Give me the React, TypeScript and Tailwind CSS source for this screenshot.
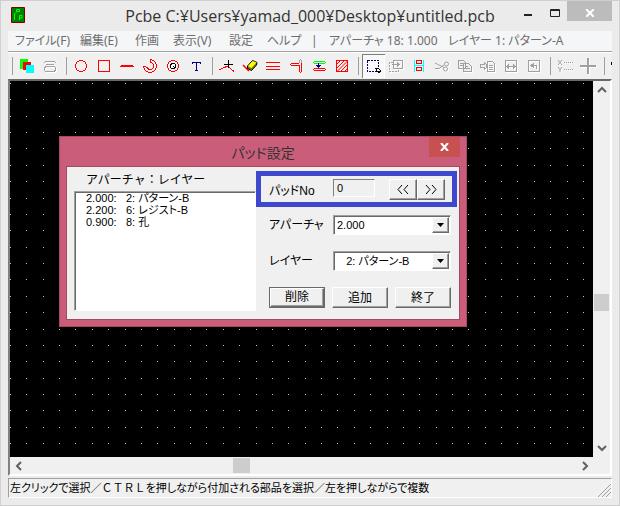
import type { ReactNode } from 'react'

// Board grid, in canvas pixels
const GRID_STEP = 16.37
const gridPath = (() => {
  let d = ''
  for (let r = 0; r < 80; r++) {
    for (let c = 0; c < 140; c++) {
      d += `M${Math.round(c * GRID_STEP)} ${Math.round(r * GRID_STEP) + 2}h1v1h-1z`
    }
  }
  return d
})()

const ARROW = {
  left: 'M7 1L3 5L7 9',
  right: 'M3 1L7 5L3 9',
  up: 'M1 7L5 3L9 7',
  down: 'M1 3L5 7L9 3',
}

const RED = '#ff0000'
const GRAY = '#a0a0a0'

type Tool = { name: string; icon: ReactNode; disabled?: boolean; active?: boolean }

const TOOL_GROUPS: Tool[][] = [
  [
    {
      name: 'Layers',
      icon: (
        <>
          <path fill="#00ff00" d="M4 5h8v10H4z" />
          <path fill={RED} d="M7 8h8v8H7z" />
          <path fill="#00ffff" d="M10 11h8v8h-8z" />
        </>
      ),
    },
    {
      name: 'Stack',
      disabled: true,
      icon: (
        <g fill="none" stroke={GRAY}>
          <path d="M6 7.500H16M7 10.500H15M5.500 8V9M16.500 8V9" />
          <rect x="5.500" y="12.500" width="11" height="5" rx="2.500" />
        </g>
      ),
    },
  ],
  [
    { name: 'Circle', icon: <circle cx="11" cy="12" r="5.500" fill="none" stroke={RED} /> },
    { name: 'Rectangle', icon: <path d="M5.500 6.500h11v11h-11z" fill="none" stroke={RED} /> },
    { name: 'Line', icon: <path d="M5 11h12v2H5zM4 11.500h14v1H4z" fill={RED} /> },
    {
      name: 'Arc',
      icon: (
        <path
          d="M4.500 13A6.500 6.500 0 1 0 12 5.500L11.500 8L14 10A3 3 0 1 1 8.500 14L6.500 12.500Z"
          fill="none"
          stroke={RED}
        />
      ),
    },
    {
      name: 'Pad',
      icon: (
        <>
          <circle cx="11" cy="12" r="5.500" fill="none" stroke={RED} />
          <circle cx="11" cy="12" r="2.500" fill="#fff" stroke="#000" />
          <path d="M10.500 11.500h1v1h-1z" />
        </>
      ),
    },
    { name: 'Text', icon: <path d="M7.500 10V8.500H15.500V10M11.500 8V17M10 16.500H13" fill="none" stroke="#000080" /> },
  ],
  [
    {
      name: 'Vertex',
      icon: (
        <g fill="none">
          <path d="M3 16L7 14L12 12L14 14L18 17.500" stroke={RED} />
          <path d="M8 10.500H17M12.500 6V14" stroke="#000" />
        </g>
      ),
    },
    {
      name: 'Erase',
      icon: (
        <g shapeRendering="auto">
          <path d="M4 11L10 17" fill="none" stroke={RED} strokeWidth="1.500" />
          <path d="M13.500 6.500L18 8.500L17.500 11L12.500 16.500L8.500 14.500L8.500 12Z" fill="#808000" stroke="#000" />
          <path d="M13.500 7L17.500 8.500L12.500 14L9 12Z" fill="#ffff00" />
        </g>
      ),
    },
    {
      name: 'Parallel',
      icon: <path d="M4 8.500H18M4 12.500H18M4 15.500H18" fill="none" stroke={RED} />,
    },
    {
      name: 'Trim',
      icon: (
        <g fill="none">
          <path d="M14.500 9V6.500L15.500 5.500L16.500 6.500V9" stroke={GRAY} />
          <path d="M14 9.500H6M14 11.500H6M5.500 10V11M14.500 11V18M16.500 9V18M15 18.500H16" stroke={RED} />
        </g>
      ),
    },
    {
      name: 'Move line',
      icon: (
        <g fill="none">
          <path d="M6 7.500H17M6 9.500H17M5.500 8V9M17.500 8V9" stroke="#00ff00" />
          <path d="M6 14.500H17M6 16.500H17M5.500 15V16M17.500 15V16" stroke={RED} />
          <path d="M10.500 9V14" stroke="#000080" />
          <path d="M8 11H13L10.500 14Z" fill="#000080" />
        </g>
      ),
    },
    {
      name: 'Fill',
      icon: (
        <g fill="none" stroke={RED}>
          <path d="M5.500 6.500h11v11h-11z" />
          <path
            shapeRendering="auto"
            d="M6 10L9 7M6 14L13 7M6 17.500L16.500 7M10 17L16 11M14 17L16 15"
          />
        </g>
      ),
    },
  ],
  [
    {
      name: 'Select',
      active: true,
      icon: (
        <>
          <path d="M5.500 6.500h11v11h-11z" fill="none" stroke="#000080" strokeDasharray="2 1" />
          <path d="M13.500 14.500l3 0l2 2l-1 2l-2-1z" fill="#fff" stroke="#000" />
        </>
      ),
    },
    {
      name: 'Move',
      disabled: true,
      icon: (
        <g fill="none" stroke={GRAY}>
          <path d="M8.500 6.500h9v8h-9z" />
          <path d="M8 8.500H4.500V17.500H13.500V15" strokeDasharray="2 1" />
          <path d="M7 10.500H13" />
          <path d="M12 8V13L15 10.500Z" fill={GRAY} stroke="none" />
        </g>
      ),
    },
    {
      name: 'Align',
      icon: (
        <g fill="none">
          <path d="M6.500 6V18M15.500 6V18M7 11.500H15" stroke="#00ffff" />
          <path d="M8.500 6.500h5v3h-5zM8.500 13.500h5v3h-5z" stroke={RED} />
        </g>
      ),
    },
    {
      name: 'Cut',
      disabled: true,
      icon: (
        <g fill="none" stroke={GRAY} shapeRendering="auto">
          <path d="M4 9L13 13.500M4 14.500H8L13 11" />
          <circle cx="15.500" cy="10" r="2" />
          <circle cx="14.500" cy="15" r="2" />
        </g>
      ),
    },
    {
      name: 'Copy',
      disabled: true,
      icon: (
        <path
          d="M4.500 6.500h5l2 2v6h-7zM9.500 9.500h5l3 3v5h-8zM6 9.500h3M6 11.500h3M11 12.500h3M11 14.500h5"
          fill="#f0f0f0"
          stroke={GRAY}
        />
      ),
    },
    {
      name: 'Paste',
      disabled: true,
      icon: (
        <g fill="none" stroke={GRAY}>
          <path d="M10.500 7.500h5l2 2v8h-7zM12 11.500h4M12 13.500h4M12 15.500h4" />
          <path d="M3.500 10.500h4v-2l3 3.500l-3 3.500v-2h-4z" fill="#f0f0f0" />
        </g>
      ),
    },
    {
      name: 'Mirror',
      disabled: true,
      icon: (
        <>
          <path d="M5.500 6.500h11v11h-11zM7 12.500H16" fill="none" stroke={GRAY} />
          <path d="M6 12.500l3-3v6zM16 12.500l-3-3v6z" fill={GRAY} />
        </>
      ),
    },
    {
      name: 'Rotate',
      disabled: true,
      icon: (
        <>
          <path d="M5.500 6.500h11v11h-11zM10 11.500H13.500V15" fill="none" stroke={GRAY} />
          <path d="M7 11.500l4-3v6z" fill={GRAY} />
        </>
      ),
    },
  ],
  [
    {
      name: 'Coordinates',
      disabled: true,
      icon: (
        <g fill="none" stroke={GRAY}>
          <path d="M4 6L8 11M8 6L4 11M4 13L6 15.500L8 13M6 15V18" shapeRendering="auto" />
          <path d="M10 8.500H19M10 15.500H19" strokeDasharray="1 1" />
        </g>
      ),
    },
    {
      name: 'Origin',
      disabled: true,
      icon: <path d="M3 12H19M11 4V20" fill="none" stroke={GRAY} strokeWidth="2" />,
    },
  ],
]

const MENUS = [
  { label: 'ファイル(F)', width: 'w-[65px]' },
  { label: '編集(E)', width: 'w-[55px]' },
  { label: '作画', width: 'w-[38px]' },
  { label: '表示(V)', width: 'w-[56px]' },
  { label: '設定', width: 'w-[38px]' },
  { label: 'ヘルプ', width: 'w-[44px]' },
]

const PADS = [
  { aperture: '2.000:', layer: '2: パターン-B' },
  { aperture: '2.200:', layer: '6: レジスト-B' },
  { aperture: '0.900:', layer: '8: 孔' },
]

const raised =
  'border border-t-white border-l-white border-r-[#696969] border-b-[#696969] shadow-[inset_-1px_-1px_0_#a0a0a0] bg-[#f0f0f0]'
const sunken =
  'border border-t-[#a0a0a0] border-l-[#a0a0a0] border-r-white border-b-white shadow-[inset_1px_1px_0_#696969]'

function Arrow({ dir }: { dir: keyof typeof ARROW }) {
  return (
    <svg width="10" height="10" fill="none" stroke="#606060" strokeWidth="2">
      <path d={ARROW[dir]} />
    </svg>
  )
}

function Separator() {
  return (
    <div className="flex w-2 shrink-0 justify-center">
      <div className="h-[18px] w-px bg-[#a0a0a0]" />
    </div>
  )
}

function Select({ id, value }: { id: string; value: string }) {
  return (
    <div className={`relative flex h-5 flex-1 bg-white ${sunken}`}>
      <select
        id={id}
        defaultValue={value}
        className="w-full appearance-none bg-transparent pl-[3px] text-[11px] leading-4 outline-none"
      >
        <option value={value}>{value}</option>
      </select>
      <span
        className={`pointer-events-none absolute top-px right-px flex h-4 w-[17px] items-center justify-center ${raised}`}
      >
        <svg width="7" height="4">
          <path d="M0 0H7L3.500 4Z" />
        </svg>
      </span>
    </div>
  )
}

function PadDialog() {
  return (
    <section
      aria-label="パッド設定"
      className="absolute top-[55px] left-[49px] w-[408px] border border-[#a34a62] bg-[#ca5e7a] px-1.5 pb-1.5"
    >
      <header className="relative flex h-[29px] items-center justify-center">
        <h2 className="pt-0.5 text-[14px] text-[#333]">パッド設定</h2>
        <button
          aria-label="Close"
          className="absolute top-0 right-0 flex h-5 w-[31px] items-center justify-center bg-[#c75050]"
        >
          <svg width="9" height="8" stroke="#fff" strokeWidth="2">
            <path d="M1 0L8 8M8 0L1 8" />
          </svg>
        </button>
      </header>

      <div className="flex border border-[#a34a62] bg-[#f0f0f0] pb-2 font-['Liberation_Sans','Noto_Sans_CJK_JP',sans-serif] text-black">
        <div className="w-[189px] pt-0.5 pl-[7px]">
          <h3 className="pl-3 text-[12px] leading-[22px] [font-feature-settings:normal]">アパーチャ：レイヤー</h3>
          <ul className={`h-[120px] w-[182px] bg-white pl-[11px] text-[11px] leading-3 ${sunken}`}>
            {PADS.map((p) => (
              <li key={p.layer} className="flex">
                <span className="w-10">{p.aperture}</span>
                <span>{p.layer}</span>
              </li>
            ))}
          </ul>
        </div>

        <div className="flex-1 pt-1 pr-0.5">
          <div className="flex h-9 items-center border-[5px] border-[#3f48cc] pr-[7px] pl-2">
            <label htmlFor="pad-no" className="w-16 pt-1 text-[12px]">
              パッドNo
            </label>
            <input
              id="pad-no"
              readOnly
              defaultValue="0"
              className="mb-0.5 h-[18px] w-[42px] border border-t-[#808080] border-l-[#808080] border-r-white border-b-white bg-[#f0f0f0] pl-[3px] text-[11px] outline-none"
            />
            <button
              aria-label="Previous pad"
              className={`ml-auto flex h-[21px] w-7 items-center justify-center ${raised}`}
            >
              <svg width="12" height="9" fill="none" stroke="#000">
                <path d="M5 0L1 4.500L5 9M11 0L7 4.500L11 9" />
              </svg>
            </button>
            <button aria-label="Next pad" className={`flex h-[21px] w-7 items-center justify-center ${raised}`}>
              <svg width="12" height="9" fill="none" stroke="#000">
                <path d="M1 0L5 4.500L1 9M7 0L11 4.500L7 9" />
              </svg>
            </button>
          </div>

          <div className="mt-2 flex items-center pr-1.5 pl-[13px]">
            <label htmlFor="aperture" className="w-16 text-[12px]">
              アパーチャ
            </label>
            <Select id="aperture" value="2.000" />
          </div>
          <div className="mt-4 flex items-center pr-1.5 pl-[13px]">
            <label htmlFor="layer" className="w-16 text-[12px]">
              レイヤー
            </label>
            <Select id="layer" value={'\u00a0\u00a0\u00a02: パターン-B'} />
          </div>

          <div className="mt-4 flex justify-between pr-1.5 pl-[13px] text-[12px] leading-4">
            <button className="h-[21px] w-14 border border-[#696969]">
              <span className={`block h-full ${raised}`}>削除</span>
            </button>
            <button className={`h-[21px] w-14 ${raised}`}>追加</button>
            <button className={`h-[21px] w-14 ${raised}`}>終了</button>
          </div>
        </div>
      </div>
    </section>
  )
}

export default function App() {
  return (
    <main className="flex min-h-screen flex-col border border-[#cfcfcf] bg-[#ebebeb] px-[7px] pb-[7px] font-['Noto_Sans','Noto_Sans_CJK_JP',sans-serif] [font-feature-settings:'palt']">
      <header className="relative flex h-[30px] items-start justify-center">
        <svg className="absolute top-1.5 left-[3px]" width="14" height="16" fill="none">
          <path d="M.5.5h13v15H.5z" fill="#008000" stroke="#800000" />
          <path d="M3.500 13V7L6 4.500M5.500 2.500h3v2h-3zM8.500 13V8.500H11V11H8.500" stroke="#00ff00" />
        </svg>
        <h1 className="pt-px font-['Open_Sans',sans-serif] text-[16px] leading-7 whitespace-nowrap text-[#333]">
          Pcbe C:¥Users¥yamad_000¥Desktop¥untitled.pcb
        </h1>
        <div className="absolute top-0 right-0 flex h-5">
          <button aria-label="Minimize" className="flex w-[30px] items-center justify-center">
            <svg width="8" height="2" className="mt-2">
              <path d="M0 0h8v2H0z" fill="#222" />
            </svg>
          </button>
          <button aria-label="Maximize" className="flex w-6 items-center justify-center">
            <svg width="10" height="8" className="mt-1" fill="none" stroke="#222">
              <path d="M.5.5h9v7H.5zM0 1.500h10" />
            </svg>
          </button>
          <button aria-label="Close" className="flex w-[45px] items-center justify-center bg-[#bcbcbc]">
            <svg width="8" height="8" className="mt-1" stroke="#fff" strokeWidth="2">
              <path d="M0 0L8 8M8 0L0 8" />
            </svg>
          </button>
        </div>
      </header>

      <nav className="flex h-5 items-center bg-[#f5f6f7] pl-[7px] text-[12px] whitespace-nowrap text-[#6d6d6d]">
        {MENUS.map((m) => (
          <button key={m.label} className={`text-left ${m.width}`}>
            {m.label}
          </button>
        ))}
        <span className="w-[18px]">|</span>
        <span className="w-[119px]">アパーチャ 18: 1.000</span>
        <span>レイヤー 1: パターン-A</span>
      </nav>

      <div className="flex h-7 items-center overflow-hidden border-t border-[#a0a0a0] bg-[#f0f0f0] shadow-[inset_0_1px_0_#fff]">
        {TOOL_GROUPS.map((group, i) => (
          <div key={i} className="flex shrink-0 items-center">
            <Separator />
            {group.map((t) => (
              <button
                key={t.name}
                aria-label={t.name}
                disabled={t.disabled}
                className={
                  t.active
                    ? 'bg-[#f8f8f8] shadow-[inset_1px_1px_0_#808080,inset_-1px_-1px_0_#fff]'
                    : t.disabled
                      ? 'drop-shadow-[1px_1px_0_#fff]'
                      : ''
                }
              >
                <svg width="23" height="24" shapeRendering="crispEdges">
                  {t.icon}
                </svg>
              </button>
            ))}
          </div>
        ))}
        <Separator />
        {/* next tool, cut off by the window edge */}
        <svg width="23" height="24" className="-mr-6 shrink-0">
          <path d="M3 8h6v3H3z" />
        </svg>
      </div>

      <div className="flex flex-1 flex-col border-2 border-t-[#696969] border-r-white border-b-white border-l-[#808080] bg-[#f0f0f0]">
        <div className="flex flex-1">
          <div className="relative flex-1 overflow-hidden bg-black">
            <svg className="absolute inset-0 h-full w-full" shapeRendering="crispEdges">
              <path d={gridPath} fill="#c0c0c0" />
            </svg>
            <PadDialog />
          </div>
          <div className="flex w-[17px] flex-col items-center justify-between py-1">
            <Arrow dir="up" />
            <div className="mt-[199px] mb-auto h-[17px] w-[15px] bg-[#cdcdcd]" />
            <Arrow dir="down" />
          </div>
        </div>
        <div className="flex h-[17px] items-center justify-between pr-5 pl-1">
          <Arrow dir="left" />
          <div className="mr-auto ml-[209px] h-[15px] w-[17px] bg-[#cdcdcd]" />
          <Arrow dir="right" />
        </div>
      </div>

      <footer className="mt-0.5 flex h-5 items-center justify-between border border-t-[#a0a0a0] border-r-white border-b-white border-l-[#a0a0a0] bg-[#f0f0f0] pl-px text-[11px] text-black">
        <span className="whitespace-nowrap">
          左クリックで選択／<span className="[font-feature-settings:normal]">ＣＴＲＬ</span>
          を押しながら付加される部品を選択／左を押しながらで複数
        </span>
        <svg width="13" height="13" className="self-end" stroke="#a0a0a0">
          <path d="M0 13L13 0M4 13L13 4M8 13L13 8" />
        </svg>
      </footer>
    </main>
  )
}
